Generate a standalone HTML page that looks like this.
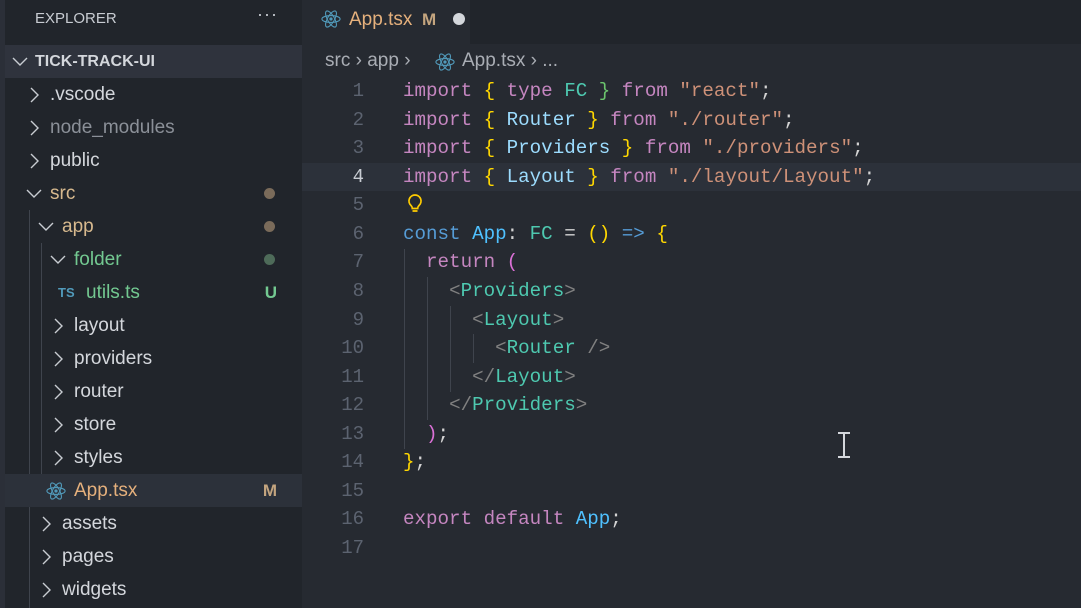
<!DOCTYPE html>
<html><head><style>
*{margin:0;padding:0;box-sizing:border-box}
body{width:1081px;height:608px;overflow:hidden;background:#262a31;font-family:"Liberation Sans",sans-serif;position:relative}
#side{position:absolute;left:0;top:0;width:302px;height:608px;background:#21252b}
#side .stripe{position:absolute;left:0;top:0;width:5px;height:608px;background:#2b2f38}
.row{position:absolute;left:5px;width:297px;height:33px;line-height:33px;font-size:19px;color:#d4d7dc;white-space:nowrap}
.chev{position:absolute;top:0;width:14px;height:33px}
.chev svg{position:absolute;top:8px}
.dot{position:absolute;right:27px;top:11px;width:11px;height:11px;border-radius:50%}
.badge{position:absolute;right:25px;top:0;font-weight:bold;font-size:17px}
.guide{position:absolute;width:1px;background:#3f444d}
#tabbar{position:absolute;left:302px;top:0;width:779px;height:44px;background:#21252b}
#tab{position:absolute;left:0;top:0;width:168px;height:44px;background:#262a31}
.code{position:absolute;left:403px;font-family:"Liberation Mono",monospace;font-size:19.2px;white-space:pre;color:#d4d4d4;line-height:28.56px}
.ln{position:absolute;left:302px;width:62px;text-align:right;font-family:"Liberation Mono",monospace;font-size:19px;color:#5c6370;line-height:28.56px}
.k{color:#c586c0}.b{color:#569cd6}.s{color:#ce9178}.y{color:#ffd700}.t{color:#4ec9b0}.g{color:#808080}.v{color:#9cdcfe}.f{color:#4fc1ff}.p{color:#da70d6}
</style></head><body>
<div id="side"><div class="stripe"></div>
<div style="position:absolute;left:35px;top:10px;font-size:15px;color:#c8ccd2">EXPLORER</div>
<div style="position:absolute;left:257px;top:4px;font-size:18px;color:#c8ccd2;letter-spacing:1px">···</div>
<div class="row" style="top:45px;background:#2f333d;font-weight:bold;font-size:16px;color:#d4d7dc"><span class="chev" style="left:6px"><svg width="18" height="16" viewBox="0 0 18 16"><path d="M2 5l7 7 7-7" stroke="#c8ccd2" stroke-width="1.4" fill="none"/></svg></span><span style="position:absolute;left:30px">TICK-TRACK-UI</span></div>
<div class="guide" style="left:29px;top:210px;height:398px"></div>
<div class="guide" style="left:41px;top:243px;height:264px"></div>
<div class="row" style="top:78px"><span class="chev" style="left:22px"><svg width="14" height="18" viewBox="0 0 14 18"><path d="M4 2l7 7-7 7" stroke="#c8ccd2" stroke-width="1.4" fill="none"/></svg></span><span style="position:absolute;left:45px">.vscode</span></div>
<div class="row" style="top:111px;color:#8b9098"><span class="chev" style="left:22px"><svg width="14" height="18" viewBox="0 0 14 18"><path d="M4 2l7 7-7 7" stroke="#c8ccd2" stroke-width="1.4" fill="none"/></svg></span><span style="position:absolute;left:45px">node_modules</span></div>
<div class="row" style="top:144px"><span class="chev" style="left:22px"><svg width="14" height="18" viewBox="0 0 14 18"><path d="M4 2l7 7-7 7" stroke="#c8ccd2" stroke-width="1.4" fill="none"/></svg></span><span style="position:absolute;left:45px">public</span></div>
<div class="row" style="top:177px;color:#d7b98e"><span class="chev" style="left:20px"><svg width="18" height="16" viewBox="0 0 18 16"><path d="M2 5l7 7 7-7" stroke="#c8ccd2" stroke-width="1.4" fill="none"/></svg></span><span style="position:absolute;left:45px">src</span><span class="dot" style="background:#7a6b5a"></span></div>
<div class="row" style="top:210px;color:#d7b98e"><span class="chev" style="left:32px"><svg width="18" height="16" viewBox="0 0 18 16"><path d="M2 5l7 7 7-7" stroke="#c8ccd2" stroke-width="1.4" fill="none"/></svg></span><span style="position:absolute;left:57px">app</span><span class="dot" style="background:#7a6b5a"></span></div>
<div class="row" style="top:243px;color:#73c991"><span class="chev" style="left:44px"><svg width="18" height="16" viewBox="0 0 18 16"><path d="M2 5l7 7 7-7" stroke="#c8ccd2" stroke-width="1.4" fill="none"/></svg></span><span style="position:absolute;left:69px">folder</span><span class="dot" style="background:#4e6b59"></span></div>
<div class="row" style="top:276px;color:#73c991"><span style="position:absolute;left:53px;font-size:13px;font-weight:bold;color:#519aba">TS</span><span style="position:absolute;left:81px">utils.ts</span><span class="badge" style="color:#73c991">U</span></div>
<div class="row" style="top:309px"><span class="chev" style="left:46px"><svg width="14" height="18" viewBox="0 0 14 18"><path d="M4 2l7 7-7 7" stroke="#c8ccd2" stroke-width="1.4" fill="none"/></svg></span><span style="position:absolute;left:69px">layout</span></div>
<div class="row" style="top:342px"><span class="chev" style="left:46px"><svg width="14" height="18" viewBox="0 0 14 18"><path d="M4 2l7 7-7 7" stroke="#c8ccd2" stroke-width="1.4" fill="none"/></svg></span><span style="position:absolute;left:69px">providers</span></div>
<div class="row" style="top:375px"><span class="chev" style="left:46px"><svg width="14" height="18" viewBox="0 0 14 18"><path d="M4 2l7 7-7 7" stroke="#c8ccd2" stroke-width="1.4" fill="none"/></svg></span><span style="position:absolute;left:69px">router</span></div>
<div class="row" style="top:408px"><span class="chev" style="left:46px"><svg width="14" height="18" viewBox="0 0 14 18"><path d="M4 2l7 7-7 7" stroke="#c8ccd2" stroke-width="1.4" fill="none"/></svg></span><span style="position:absolute;left:69px">store</span></div>
<div class="row" style="top:441px"><span class="chev" style="left:46px"><svg width="14" height="18" viewBox="0 0 14 18"><path d="M4 2l7 7-7 7" stroke="#c8ccd2" stroke-width="1.4" fill="none"/></svg></span><span style="position:absolute;left:69px">styles</span></div>
<div class="row" style="top:474px;background:#2c313a;color:#e5b07c"><svg style="position:absolute;left:41px;top:7px" width="20" height="20" viewBox="-11 -11 22 22"><g fill="none" stroke="#519aba" stroke-width="1.2"><ellipse rx="10" ry="3.8"/><ellipse rx="10" ry="3.8" transform="rotate(60)"/><ellipse rx="10" ry="3.8" transform="rotate(120)"/></g><circle r="1.8" fill="#519aba"/></svg><span style="position:absolute;left:69px">App.tsx</span><span class="badge" style="color:#c4a57f">M</span></div>
<div class="row" style="top:507px"><span class="chev" style="left:34px"><svg width="14" height="18" viewBox="0 0 14 18"><path d="M4 2l7 7-7 7" stroke="#c8ccd2" stroke-width="1.4" fill="none"/></svg></span><span style="position:absolute;left:57px">assets</span></div>
<div class="row" style="top:540px"><span class="chev" style="left:34px"><svg width="14" height="18" viewBox="0 0 14 18"><path d="M4 2l7 7-7 7" stroke="#c8ccd2" stroke-width="1.4" fill="none"/></svg></span><span style="position:absolute;left:57px">pages</span></div>
<div class="row" style="top:573px"><span class="chev" style="left:34px"><svg width="14" height="18" viewBox="0 0 14 18"><path d="M4 2l7 7-7 7" stroke="#c8ccd2" stroke-width="1.4" fill="none"/></svg></span><span style="position:absolute;left:57px">widgets</span></div>
</div>
<div id="tabbar"><div id="tab">
<svg style="position:absolute;left:19px;top:9px" width="20" height="20" viewBox="-11 -11 22 22"><g fill="none" stroke="#519aba" stroke-width="1.2"><ellipse rx="10" ry="3.8"/><ellipse rx="10" ry="3.8" transform="rotate(60)"/><ellipse rx="10" ry="3.8" transform="rotate(120)"/></g><circle r="1.8" fill="#519aba"/></svg>
<span style="position:absolute;left:47px;top:9px;font-size:19px;color:#e5b07c">App.tsx</span>
<span style="position:absolute;left:120px;top:10px;font-size:17px;font-weight:bold;color:#c4a57f">M</span>
<span style="position:absolute;left:151px;top:13px;width:12px;height:12px;border-radius:50%;background:#d4d7dc"></span>
</div></div>
<div style="position:absolute;left:325px;top:50px;font-size:19px;color:#a9adb4;white-space:nowrap">src › app ›</div>
<svg style="position:absolute;left:435px;top:52px" width="20" height="20" viewBox="-11 -11 22 22"><g fill="none" stroke="#519aba" stroke-width="1.2"><ellipse rx="10" ry="3.8"/><ellipse rx="10" ry="3.8" transform="rotate(60)"/><ellipse rx="10" ry="3.8" transform="rotate(120)"/></g><circle r="1.8" fill="#519aba"/></svg>
<div style="position:absolute;left:462px;top:50px;font-size:19px;color:#a9adb4;white-space:nowrap">App.tsx › ...</div>
<div style="position:absolute;left:302px;top:163px;width:779px;height:28px;background:#2c313a"></div>
<div class="ln" style="top:77px">1<br>2<br>3<br><span style="color:#c8ccd2">4</span><br>5<br>6<br>7<br>8<br>9<br>10<br>11<br>12<br>13<br>14<br>15<br>16<br>17</div>
<div class="guide" style="left:404px;top:249px;height:200px"></div>
<div class="guide" style="left:427px;top:277px;height:143px"></div>
<div class="guide" style="left:450px;top:306px;height:86px"></div>
<div class="guide" style="left:473px;top:334px;height:29px"></div>
<svg style="position:absolute;left:406px;top:193px" width="18" height="22" viewBox="0 0 18 22"><path d="M9 2a6 6 0 0 0-4 10.5c1 1 1.3 2 1.3 3h5.4c0-1 .3-2 1.3-3A6 6 0 0 0 9 2z M6.5 18h5" stroke="#ffcc00" stroke-width="1.7" fill="none"/></svg>
<div class="code" style="top:77px"><span class="k">import</span> <span class="y">{</span> <span class="k">type</span> <span class="t">FC</span> <span style="color:#6bc46d">}</span> <span class="k">from</span> <span class="s">"react"</span>;
<span class="k">import</span> <span class="y">{</span> <span class="v">Router</span> <span class="y">}</span> <span class="k">from</span> <span class="s">"./router"</span>;
<span class="k">import</span> <span class="y">{</span> <span class="v">Providers</span> <span class="y">}</span> <span class="k">from</span> <span class="s">"./providers"</span>;
<span class="k">import</span> <span class="y">{</span> <span class="v">Layout</span> <span class="y">}</span> <span class="k">from</span> <span class="s">"./layout/Layout"</span>;

<span class="b">const</span> <span class="f">App</span>: <span class="t">FC</span> = <span class="y">()</span> <span class="b">=&gt;</span> <span class="y">{</span>
  <span class="k">return</span> <span class="p">(</span>
    <span class="g">&lt;</span><span class="t">Providers</span><span class="g">&gt;</span>
      <span class="g">&lt;</span><span class="t">Layout</span><span class="g">&gt;</span>
        <span class="g">&lt;</span><span class="t">Router</span> <span class="g">/&gt;</span>
      <span class="g">&lt;/</span><span class="t">Layout</span><span class="g">&gt;</span>
    <span class="g">&lt;/</span><span class="t">Providers</span><span class="g">&gt;</span>
  <span class="p">)</span>;
<span class="y">}</span>;

<span class="k">export</span> <span class="k">default</span> <span class="f">App</span>;
</div>
<div style="position:absolute;left:843px;top:432px;width:2px;height:26px;background:#d4d7dc"></div>
<div style="position:absolute;left:838px;top:432px;width:12px;height:2px;background:#d4d7dc"></div>
<div style="position:absolute;left:838px;top:456px;width:12px;height:2px;background:#d4d7dc"></div>
</body></html>
